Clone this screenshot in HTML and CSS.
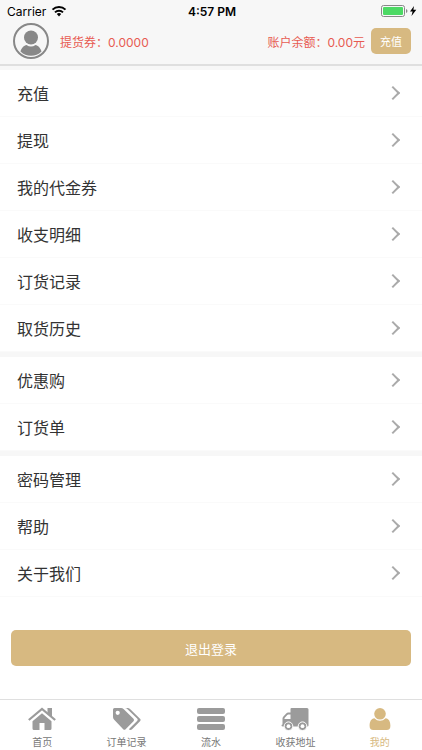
FILE: index.html
```html
<!DOCTYPE html>
<html lang="zh-CN">
<head>
<meta charset="utf-8">
<meta name="viewport" content="width=device-width, initial-scale=1">
<title>我的</title>
<link rel="stylesheet" href="styles.css">
</head>
<body>
<div class="app">
  <header class="top">
    <div class="status">
      <div class="carrier">
        <span>Carrier</span>
        <svg width="16" height="12" viewBox="0 0 16 12" fill="none" stroke="#000" stroke-width="2" aria-hidden="true"><path d="M1.500 4.600a9.400 9.400 0 0 1 13 0M4 7.400a5.800 5.800 0 0 1 8 0"/><path d="M8 11.400 5.800 9.100a3.200 3.200 0 0 1 4.400 0z" fill="#000" stroke="none"/></svg>
      </div>
      <time class="clock">4:57 PM</time>
      <div class="power">
        <svg width="36" height="12" viewBox="0 0 36 12" aria-hidden="true"><rect x=".5" y=".5" width="23" height="11" rx="2" fill="none" stroke="#888"/><rect x="2" y="2" width="20" height="8" rx="1" fill="#4cd964"/><path d="M25 4q1.500 .5 1.500 2T25 8z" fill="#888"/><path d="M33 1l-4 5.600h2.600L30.500 11l4.800-6.200h-2.900z"/></svg>
      </div>
    </div>
    <div class="account">
      <svg class="avatar" width="36" height="36" viewBox="0 0 36 36" fill="#888" aria-hidden="true"><circle cx="18" cy="18" r="17" fill="none" stroke="#888" stroke-width="2"/><circle cx="18" cy="14.500" r="7"/><path d="M7.500 28.500C8.500 24.500 11 22.800 13.500 22q4.500 3 9 0c2.500.8 5 2.500 6 6.500Q24 32.800 18 32.800T7.500 28.500z"/></svg>
      <span class="voucher">提货券：0.0000</span>
      <span class="balance">账户余额：0.00元</span>
      <button class="recharge" type="button">充值</button>
    </div>
  </header>

  <main class="content">
    <nav class="group">
      <a class="row" href="#">充值</a>
      <a class="row" href="#">提现</a>
      <a class="row" href="#">我的代金券</a>
      <a class="row" href="#">收支明细</a>
      <a class="row" href="#">订货记录</a>
      <a class="row" href="#">取货历史</a>
    </nav>
    <nav class="group">
      <a class="row" href="#">优惠购</a>
      <a class="row" href="#">订货单</a>
    </nav>
    <nav class="group">
      <a class="row" href="#">密码管理</a>
      <a class="row" href="#">帮助</a>
      <a class="row" href="#">关于我们</a>
    </nav>
    <button class="logout" type="button">退出登录</button>
  </main>

  <nav class="tabs">
    <a class="tab" href="#">
      <svg width="28" height="24" viewBox="0 0 28 24" fill="currentColor" aria-hidden="true"><path d="M14 6.200 4.500 14.200V21.500q0 1.500 1.500 1.500H11.500v-7h5v7H22q1.500 0 1.500-1.500v-7.300z"/><path d="M.8 13 14 2 27.200 13" fill="none" stroke="currentColor" stroke-width="2.200"/><path d="M19.500 1H24v9l-4.500-3.800z"/></svg>
      <span>首页</span>
    </a>
    <a class="tab" href="#">
      <svg width="28" height="24" viewBox="0 0 28 24" fill="currentColor" aria-hidden="true"><path fill-rule="evenodd" d="M0 2.500Q0 1 1.500 1H8q1.500 0 2.800 1.200l9.700 9.600q1.200 1.200 0 2.400l-7.900 8q-1.200 1.200-2.400 0L1.200 12.800Q0 11.600 0 10zM4.700 3.700a2.100 2.100 0 1 0 0 4.200 2.100 2.100 0 0 0 0-4.200z"/><path d="M11.800 1h2.700q1.500 0 2.800 1.200l9.700 9.600q1.200 1.200 0 2.400l-7.900 8q-1.500 1.500-3.300 0l8.300-8.300q1.200-1.200 0-2.400L14.500 2.200Q13.300 1 11.800 1z"/></svg>
      <span>订单记录</span>
    </a>
    <a class="tab" href="#">
      <svg width="28" height="24" viewBox="0 0 28 24" fill="currentColor" aria-hidden="true"><rect y="1" width="28" height="6" rx="2"/><rect y="9" width="28" height="6" rx="2"/><rect y="17" width="28" height="6" rx="2"/></svg>
      <span>流水</span>
    </a>
    <a class="tab" href="#">
      <svg width="28" height="24" viewBox="0 0 28 24" fill="currentColor" aria-hidden="true"><path fill-rule="evenodd" d="M10.500 1H26q1.500 0 1.500 1.500v16q0 1-1 1H2Q.5 19.500.5 18.500q0-.8 1-.9v-6.100q0-1.200.9-2l2.800-3Q6 5.500 7.200 5.500H9.500V2q0-1 1-1zM3.500 12h6V7.500H7.300Q6.700 7.500 6.300 8L3.800 10.700q-.3.300-.3.700z"/><circle cx="7.500" cy="19.200" r="4.300" stroke="#fff"/><circle cx="21.500" cy="19.200" r="4.300" stroke="#fff"/><g fill="#fff"><circle cx="7.500" cy="19.200" r="1.900"/><circle cx="21.500" cy="19.200" r="1.900"/></g></svg>
      <span>收获地址</span>
    </a>
    <a class="tab tab-active" href="#" aria-current="page">
      <svg width="28" height="24" viewBox="0 0 28 24" fill="currentColor" aria-hidden="true"><circle cx="14" cy="6.800" r="5.800"/><path d="M8.400 11.300q2.400 2.500 5.600 2.500t5.600-2.500c3.300.4 4.800 3.400 4.800 7.400q0 4.300-3.700 4.300H7.300q-3.700 0-3.700-4.300c0-4 1.500-7 4.800-7.400z"/></svg>
      <span>我的</span>
    </a>
  </nav>
</div>
</body>
</html>
```
FILE: styles.css
```css
* {
  box-sizing: border-box;
}

body {
  margin: 0;
  background: #fff;
  color: #333;
  font-family: Inter, "Noto Sans CJK SC", sans-serif;
}

a {
  color: inherit;
  text-decoration: none;
}

button {
  border: 0;
  background: #d7b981;
  color: #fff;
  font-family: inherit;
}

svg {
  display: block;
}

.app {
  display: flex;
  flex-direction: column;
  min-height: 100vh;
}

.top {
  border-bottom: 2px solid #dfdfdf;
  background: #f7f7f7;
}

.status {
  display: grid;
  grid-template-columns: 1fr auto 1fr;
  align-items: center;
  height: 22px;
  padding: 0 5px 0 7px;
  color: #000;
  font-size: 12px;
}

.carrier {
  display: flex;
  align-items: center;
  gap: 5px;
}

.clock {
  font-weight: 600;
}

.power {
  justify-self: end;
}

.account {
  display: flex;
  align-items: center;
  height: 42px;
  padding: 0 11px 4px 13px;
  color: #e75b52;
  font-size: 12px;
}

.voucher {
  margin-left: 11px;
}

.balance {
  margin-left: auto;
}

.recharge {
  height: 26px;
  margin-left: 6px;
  padding: 0 9px;
  border-radius: 5px;
  font-size: 11px;
}

.content {
  display: flex;
  flex: 1;
  flex-direction: column;
}

.group {
  border-top: 5px solid #f7f7f7;
}

.group:first-child {
  border-top-width: 4px;
}

.row {
  display: flex;
  align-items: center;
  justify-content: space-between;
  height: 47px;
  padding: 0 24px 0 17px;
  border-bottom: 1px solid #fafafa;
  font-size: 16px;
}

.row::after {
  width: 8px;
  height: 8px;
  border: solid #aaa;
  border-width: 2px 2px 0 0;
  content: "";
  transform: rotate(45deg);
}

.logout {
  height: 36px;
  margin: 33px 11px;
  border-radius: 5px;
  font-size: 13px;
}

.tabs {
  display: flex;
  height: 51px;
  border-top: 1px solid #dfdfdf;
}

.tab {
  display: flex;
  flex: 1;
  flex-direction: column;
  align-items: center;
  gap: 4px;
  padding-top: 7px;
  color: #9b9b9b;
  font-size: 10px;
  line-height: 15px;
}

.tab span {
  color: #777;
}

.tab-active,
.tab-active span {
  color: #d7b981;
}
```
